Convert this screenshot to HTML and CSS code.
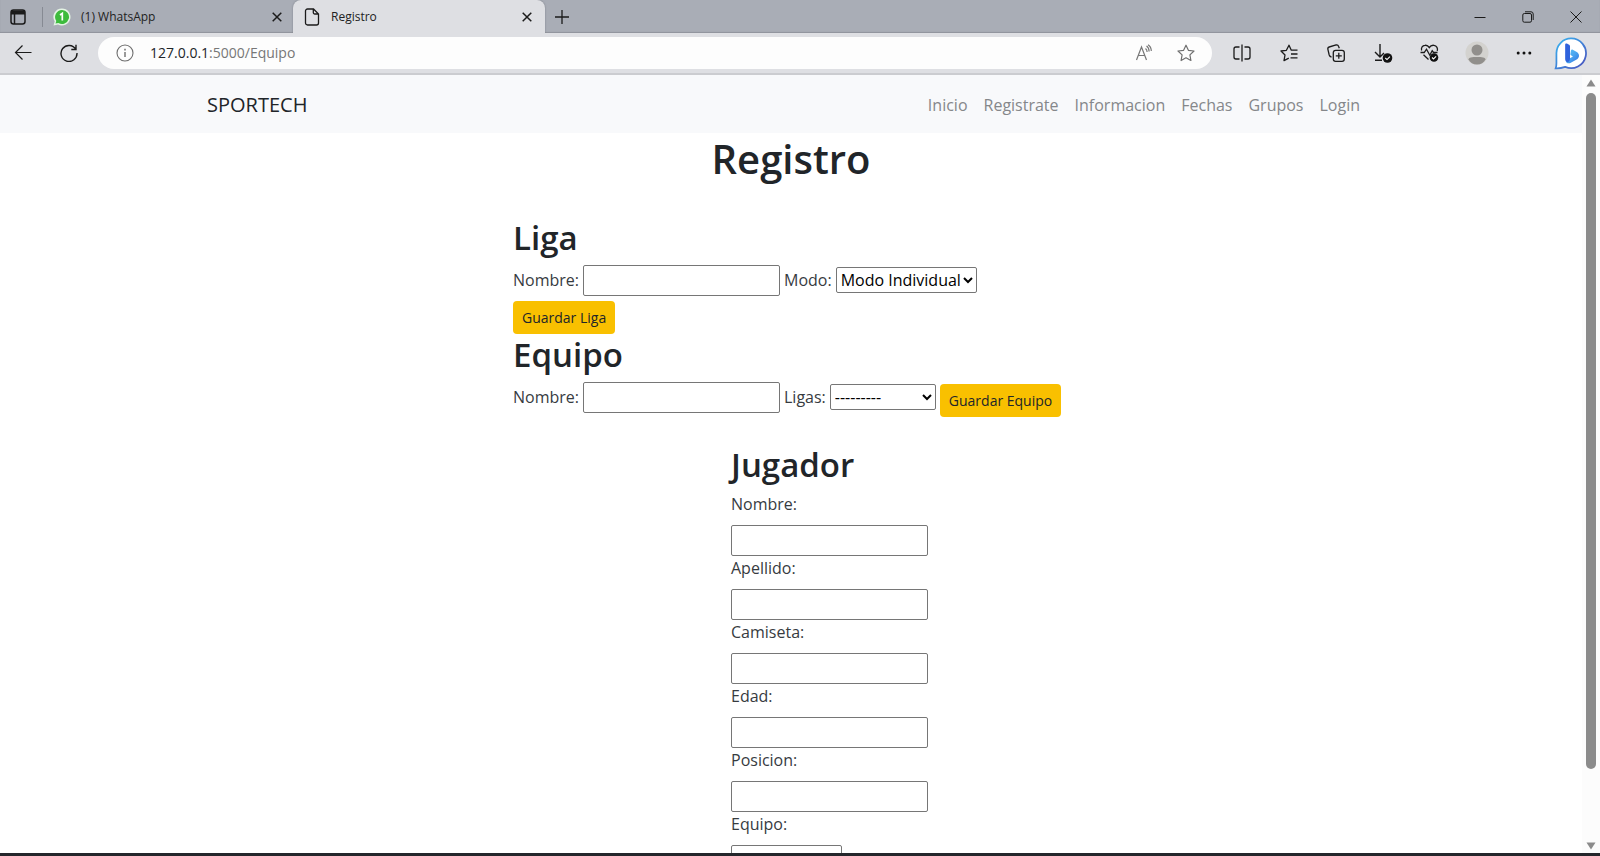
FILE: index.html
```html
<!DOCTYPE html>
<html lang="es">
<head>
<meta charset="utf-8">
<title>Registro</title>
<link rel="stylesheet" href="styles.css">
</head>
<body>
<div class="tabstrip">
  <button class="tab-menu" aria-label="Pestañas"><svg width="16" height="16" viewBox="0 0 16 16" fill="none" stroke="#1b1b1b" stroke-width="1.5"><rect x="1" y="1" width="14" height="14" rx="2.5"/><path d="M1 3.5h14" stroke-width="4"/><path d="M4.5 4v11"/></svg></button>
  <span class="divider"></span>
  <div class="tab">
    <svg width="18" height="18" viewBox="0 0 18 18"><path d="M9 .5a8.500 8.500 0 1 1-4 16L.5 17.500l1.200-4A8.500 8.500 0 0 1 9 .5z" fill="#e4f4e4"/><path d="M9 2a7 7 0 1 1-3.600 13L2.500 15.600l.8-2.700A7 7 0 0 1 9 2z" fill="#3dbb3d"/><path d="M7 7l2.300-1.600v7" fill="none" stroke="#fff" stroke-width="1.700"/></svg>
    <span class="tab-title">(1) WhatsApp</span>
    <button class="tab-close" aria-label="Cerrar"><svg width="10" height="10" viewBox="0 0 10 10" stroke="#1b1b1b" stroke-width="1.500"><path d="M.7.7l8.600 8.600M9.300.7L.7 9.300"/></svg></button>
  </div>
  <div class="tab tab-active">
    <svg width="18" height="18" viewBox="0 0 18 18" fill="none" stroke="#1b1b1b" stroke-width="1.300"><path d="M4.500 1h6l5 5v9a2 2 0 0 1-2 2h-9a2 2 0 0 1-2-2V3a2 2 0 0 1 2-2zM10.300 1v3.500a1.500 1.500 0 0 0 1.500 1.500h3.700"/></svg>
    <span class="tab-title">Registro</span>
    <button class="tab-close" aria-label="Cerrar"><svg width="10" height="10" viewBox="0 0 10 10" stroke="#1b1b1b" stroke-width="1.500"><path d="M.7.7l8.600 8.600M9.300.7L.7 9.300"/></svg></button>
  </div>
  <button class="tab-new" aria-label="Nueva pestaña"><svg width="14" height="14" viewBox="0 0 14 14" stroke="#1b1b1b" stroke-width="1.300"><path d="M7 0v14M0 7h14"/></svg></button>
  <div class="window-controls">
    <button aria-label="Minimizar"><svg width="12" height="12" viewBox="0 0 12 12" stroke="#1b1b1b"><path d="M.5 6.500h11"/></svg></button>
    <button aria-label="Restaurar"><svg width="12" height="12" viewBox="0 0 12 12" fill="none" stroke="#1b1b1b"><rect x=".8" y="2.500" width="8.700" height="8.700" rx="1.500"/><path d="M3 .8h6a2.200 2.200 0 0 1 2.200 2.200v6"/></svg></button>
    <button aria-label="Cerrar ventana"><svg width="12" height="12" viewBox="0 0 12 12" stroke="#1b1b1b"><path d="M.5.5l11 11M11.500.5l-11 11"/></svg></button>
  </div>
</div>
<div class="toolbar">
  <button class="tool" aria-label="Atrás"><svg width="18" height="18" viewBox="0 0 18 18" fill="none" stroke="#1b1b1b" stroke-width="1.200"><path d="M17.500 8.500H1.500M8.500 1.500l-7 7 7 7"/></svg></button>
  <button class="tool" aria-label="Actualizar"><svg width="18" height="18" viewBox="0 0 18 18" fill="none" stroke="#1b1b1b" stroke-width="1.400"><path d="M15.800 5.200A8 8 0 1 0 17 9M16 .8v4.700h-4.700"/></svg></button>
  <div class="address">
    <svg width="18" height="18" viewBox="0 0 18 18" fill="none" stroke="#6e6e6e" stroke-width="1.100"><circle cx="9" cy="9" r="8"/><path d="M9 8v5" stroke-width="1.400"/><path d="M9 4.800v1.600" stroke-width="1.500"/></svg>
    <span class="url">127.0.0.1<span class="url-path">:5000/Equipo</span></span>
    <svg width="18" height="18" viewBox="0 0 18 18" fill="none" stroke="#777" stroke-width="1.200"><path d="M1.500 16L6.500 3l5 13M3.200 11.500h6.600M10.500 4.500c1 .8 1.600 2 1.600 3.500M11.500 2c1.600 1 2.600 3 2.600 5.500M13 .8c1.800 1.200 3.300 3.400 3.300 6.200"/></svg>
    <svg width="18" height="18" viewBox="0 0 18 18" fill="none" stroke="#6e6e6e" stroke-width="1.200" stroke-linejoin="round"><path d="M9 1.200l2.400 5.100 5.600.7-4.100 3.900 1 5.600L9 13.800l-4.900 2.700 1-5.600L1 7l5.600-.7z"/></svg>
  </div>
  <div class="tools">
    <button class="tool" aria-label="Pantalla dividida"><svg width="18" height="18" viewBox="0 0 18 18" fill="none" stroke="#1b1b1b" stroke-width="1.300"><path d="M6.500 3H3a2 2 0 0 0-2 2v8a2 2 0 0 0 2 2h3.500M11.500 3H15a2 2 0 0 1 2 2v8a2 2 0 0 1-2 2h-3.500M9 .5v17"/></svg></button>
    <button class="tool" aria-label="Favoritos"><svg width="18" height="18" viewBox="0 0 18 18" fill="none" stroke="#1b1b1b" stroke-width="1.300" stroke-linejoin="round"><path d="M17.500 6.200h-6.200L9 1.200 6.400 6.300 1 7l4 4-1 5.700 4.800-2.500M11 10h6.500M10.500 13.800h7"/></svg></button>
    <button class="tool" aria-label="Colecciones"><svg width="18" height="18" viewBox="0 0 18 18" fill="none" stroke="#1b1b1b" stroke-width="1.300"><rect x="6.300" y="6.300" width="11" height="11" rx="2.300"/><path d="M11.800 8.800v6M8.800 11.800h6M4.500 13C3 12.800 2.500 12 2.200 11L.9 5.300c-.3-1.200.2-2 1.300-2.300l6.900-2c1.200-.3 2 .1 2.400 1.200l.8 2"/></svg></button>
    <button class="tool" aria-label="Descargas"><svg width="20" height="20" viewBox="0 0 20 20" fill="none" stroke="#1b1b1b" stroke-width="1.400"><path d="M7 1v13M2 9l5 5 4-4M2 17.300h7"/><circle cx="14.500" cy="15" r="4.800" fill="#111" stroke="none"/><path d="M12.300 15l1.700 1.600 2.900-3" stroke="#fff" stroke-width="1.100"/></svg></button>
    <button class="tool" aria-label="Rendimiento"><svg width="19" height="18" viewBox="0 0 19 18" fill="none" stroke="#1b1b1b" stroke-width="1.300"><path d="M8.500 15.500L3.500 10.800M1.600 6.500C.9 3.700 2.500 1.600 4.900 1.300c2-.3 3.500.8 4.400 2.300.9-1.500 2.600-2.600 4.600-2.300 2.900.5 4.200 3 3.300 5.700M.5 8.500h3.700l2.300-3.300 3.300 6 2.400-4.500 1.300 1.800h4"/><circle cx="14" cy="13.500" r="4.300" fill="#111" stroke="none"/><path d="M12 13.500l1.500 1.400 2.600-2.600" stroke="#fff" stroke-width="1.100"/></svg></button>
    <button class="tool" aria-label="Perfil"><svg width="24" height="24" viewBox="0 0 24 24"><circle cx="12" cy="12" r="11.500" fill="#d3d2cf"/><circle cx="12" cy="9" r="5.500" fill="#918f8c"/><path d="M3.500 18.500C3.500 16.500 7 16 12 16s8.500.5 8.500 2.500C19 21.500 16 23.500 12 23.500S5 21.500 3.500 18.500z" fill="#918f8c"/></svg></button>
    <button class="tool" aria-label="Más"><svg width="16" height="4" viewBox="0 0 16 4" fill="#111"><circle cx="2.200" cy="2" r="1.500"/><circle cx="8" cy="2" r="1.500"/><circle cx="13.800" cy="2" r="1.500"/></svg></button>
    <button class="tool" aria-label="Bing"><svg width="33" height="33" viewBox="0 0 34 34"><defs><linearGradient id="ring" x1="0" y1="0" x2="1" y2="1"><stop offset="0" stop-color="#38b6f1"/><stop offset="1" stop-color="#4a50bd"/></linearGradient><linearGradient id="b" x1="0" y1="0" x2="1" y2="1"><stop offset="0" stop-color="#5cc3f5"/><stop offset=".5" stop-color="#4aa5f0"/><stop offset="1" stop-color="#2f6fe0"/></linearGradient></defs><path d="M17.500 1.500a15.300 15.300 0 1 1-6 29.300C8 32 4.500 32.500 1.700 32.300c1-2.300.8-4 .8-7.300v-8.500A15.200 15.200 0 0 1 17.500 1.500z" fill="#fff" stroke="url(#ring)" stroke-width="1.800"/><path d="M12 24.500l7.500-4.500-2-1.200c-.5-.3-.8-.8-.6-1.400l.6-3.500c.2-1 1-1.300 1.800-.8l4.200 2.300c3 1.800 3 5.700.3 7.400l-6.500 3.800c-2.300 1.300-5 .3-5.300-2.100z" fill="url(#b)"/><path d="M11.500 8c0-1 .8-1.600 1.800-1.200l1.800.8c.9.400 1.400 1.100 1.400 2.100v12.500c0 2-1 3.500-2.500 3.500s-2.500-1.200-2.500-2.700z" fill="#2f62dc"/></svg></button>
  </div>
</div>
<div class="viewport">
  <div class="page">
    <header class="navbar">
      <div class="container">
        <a class="brand" href="#">SPORTECH</a>
        <nav class="nav"><a href="#">Inicio</a><a href="#">Registrate</a><a href="#">Informacion</a><a href="#">Fechas</a><a href="#">Grupos</a><a href="#">Login</a></nav>
      </div>
    </header>
    <main class="content">
      <h1>Registro</h1>
      <form class="group">
        <h2>Liga</h2>
        <div class="row">
          <label for="liga">Nombre:</label><input class="field" id="liga" type="text">
          <label for="modo">Modo:</label><select class="mode" id="modo"><option>Modo Individual</option></select>
        </div>
        <button class="save" type="button">Guardar Liga</button>
      </form>
      <form class="group">
        <h2>Equipo</h2>
        <div class="row">
          <label for="equipo">Nombre:</label><input class="field" id="equipo" type="text">
          <label for="ligas">Ligas:</label><select class="league" id="ligas"><option>---------</option></select>
          <button class="save" type="button">Guardar Equipo</button>
        </div>
      </form>
      <form class="player">
        <h2>Jugador</h2>
        <label for="p1">Nombre:</label><input class="field" id="p1" type="text">
        <label for="p2">Apellido:</label><input class="field" id="p2" type="text">
        <label for="p3">Camiseta:</label><input class="field" id="p3" type="text">
        <label for="p4">Edad:</label><input class="field" id="p4" type="text">
        <label for="p5">Posicion:</label><input class="field" id="p5" type="text">
        <label for="p6">Equipo:</label><select class="team" id="p6"><option>---------</option></select>
      </form>
    </main>
  </div>
  <div class="scrollbar">
    <svg width="10" height="8" viewBox="0 0 10 8" fill="#8b8b8b"><path d="M5 .5L9.500 7.500H.5z"/></svg>
    <div class="track"><div class="thumb"></div></div>
    <svg width="10" height="8" viewBox="0 0 10 8" fill="#8b8b8b"><path d="M5 7.500L9.500.5H.5z"/></svg>
  </div>
</div>
</body>
</html>
```
FILE: styles.css
```css
* { box-sizing: border-box; }
body {
  margin: 0;
  height: 100vh;
  display: flex;
  flex-direction: column;
  overflow: hidden;
  font: 16px/24px "Open Sans", "Noto Sans", sans-serif;
  color: #212529;
  background: #fff;
  border-bottom: 3px solid #24262b;
}
button, input, select { font: inherit; color: inherit; margin: 0; }
a { color: inherit; text-decoration: none; }
svg { display: block; flex: none; }
label { color: #373b3f; }

.tabstrip {
  display: flex;
  flex: none;
  height: 33px;
  background: #a9adb6;
  box-shadow: inset 0 -1px 1px #8f939c;
  font-size: 12px;
  line-height: 16px;
}
.tabstrip button, .tool {
  display: flex;
  align-items: center;
  justify-content: center;
  padding: 0;
  border: 0;
  background: none;
}
.tab-menu { width: 36px; }
.divider { width: 1px; height: 20px; margin: 7px 0 0 6px; background: #868a93; }
.tab {
  display: flex;
  align-items: center;
  gap: 10px;
  width: 250px;
  padding: 0 11px 0 10px;
}
.tab-title { flex: 1; color: #222; }
.tab-active {
  width: 252px;
  padding: 0 13px 0 10px;
  background: #dedfe3;
  border-radius: 8px 8px 0 0;
  box-shadow: 0 0 2px #777b84;
}
.tab-new { width: 34px; }
.window-controls { display: flex; margin-left: auto; }
.window-controls button { width: 48px; }

.toolbar {
  display: flex;
  flex: none;
  align-items: center;
  height: 42px;
  background: #dedfe3;
  border-bottom: 2px solid #cbccd0;
}
.tool { width: 46px; height: 40px; }
.address {
  flex: 1;
  display: flex;
  align-items: center;
  gap: 24px;
  height: 32px;
  margin-left: 6px;
  padding: 0 17px 0 18px;
  border-radius: 16px;
  background: #fdfdfd;
  font-size: 14px;
}
.url { flex: 1; margin-left: -8px; }
.url-path { color: #777; }
.tools { display: flex; padding: 0 6px; }
.tools .tool { width: 47px; }

.viewport { flex: 1; min-height: 0; display: flex; }
.page { flex: 1; overflow: hidden; }
.navbar { background: #f8f9fb; }
.container {
  display: flex;
  align-items: center;
  justify-content: space-between;
  max-width: 1168px;
  height: 58px;
  margin: 0 auto;
  padding: 2px 15px 0 0;
}
.brand { font-size: 20px; }
.nav { display: flex; gap: 16px; color: #85878a; }

.content { max-width: 556px; margin: 0 auto; }
h1, h2 { margin: 0; font-weight: 600; }
h1 { font-size: 40px; line-height: 52px; margin-bottom: 33px; text-align: center; }
h2 { font-size: 33px; line-height: 40px; margin-bottom: 7px; }
.group + .group { margin-top: 1px; }
.row { display: flex; align-items: flex-start; gap: 4px; }
.row label { line-height: 31px; }
.row select, .row .save { margin-top: 2px; }
.field {
  width: 197px;
  height: 31px;
  border: 1px solid #767676;
  border-radius: 2px;
  background: #fff;
}
select {
  height: 26px;
  padding: 0;
  border: 1px solid #767676;
  border-radius: 2px;
  background: #fff;
  color: #000;
}
.mode { width: 141px; }
.league { width: 106px; }
.team { width: 111px; }
.save {
  height: 33px;
  padding: 0 9px;
  border: 0;
  border-radius: 4px;
  background: #f9c000;
  font-size: 14px;
}
.group > .save { margin-top: 5px; }
.player {
  display: flex;
  flex-direction: column;
  align-items: flex-start;
  padding: 28px 0 0 218px;
}
.player label { margin-bottom: 9px; }
.team { height: 31px; }

.scrollbar {
  display: flex;
  flex-direction: column;
  align-items: center;
  gap: 6px;
  width: 18px;
  padding: 4px 0 3px;
  background: #fcfcfc;
}
.track { flex: 1; }
.thumb { width: 10px; height: 91%; border-radius: 5px; background: #8b8b8b; }
```
